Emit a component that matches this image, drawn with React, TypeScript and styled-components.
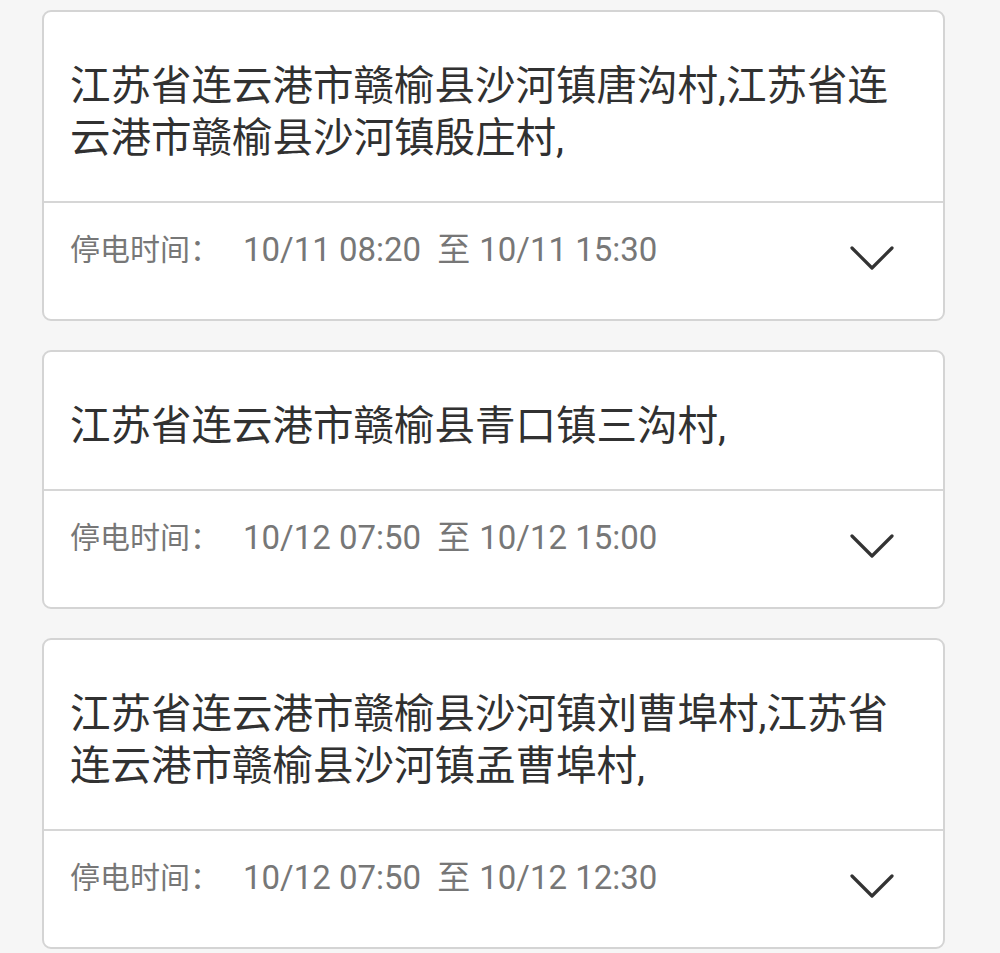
import styled, { createGlobalStyle } from "styled-components";

const GlobalStyle = createGlobalStyle`
  body {
    margin: 0;
    background: #f6f6f6;
    font-family: Roboto, "Noto Sans CJK SC", sans-serif;
  }
`;

const Page = styled.div`
  display: flex;
  flex-direction: column;
  gap: 29px;
  padding: 10px 55px 8px 42px;
`;

const Card = styled.div`
  background: #fff;
  border: 2px solid #d4d4d4;
  border-radius: 9px;
`;

const Address = styled.div`
  padding: 48px 26px 37px 26px;
  font-size: 40.5px;
  line-height: 52px;
  color: #313131;
`;

const Footer = styled.div`
  display: flex;
  align-items: flex-start;
  padding: 29px 49px 48px 26px;
  border-top: 2px solid #d6d6d6;
`;

const Label = styled.span`
  font-size: 30px;
  line-height: 36px;
  color: #777;
`;

const Time = styled.span`
  margin-left: 23px;
  font-size: 33px;
  line-height: 36px;
  color: #777;
`;

const To = styled.span`
  margin: 0 9px 0 16px;
`;

const Toggle = styled.button`
  margin-left: auto;
  margin-top: 14px;
  padding: 0;
  border: none;
  background: none;
  display: flex;
  color: #333;
`;

const Chevron = () => (
  <svg width="44" height="25" viewBox="0 0 44 25" fill="none">
    <polyline
      points="2,2 22,22 42,2"
      stroke="currentColor"
      strokeWidth="3.2"
      strokeLinecap="round"
      strokeLinejoin="round"
    />
  </svg>
);

const outages = [
  {
    address: "江苏省连云港市赣榆县沙河镇唐沟村,江苏省连云港市赣榆县沙河镇殷庄村,",
    start: "10/11 08:20",
    end: "10/11 15:30",
  },
  {
    address: "江苏省连云港市赣榆县青口镇三沟村,",
    start: "10/12 07:50",
    end: "10/12 15:00",
  },
  {
    address: "江苏省连云港市赣榆县沙河镇刘曹埠村,江苏省连云港市赣榆县沙河镇孟曹埠村,",
    start: "10/12 07:50",
    end: "10/12 12:30",
  },
];

const OutageCard = ({ item }: any) => {
  return (
    <Card>
      <Address>{item.address}</Address>
      <Footer>
        <Label>停电时间：</Label>
        <Time>
          {item.start}
          <To>至</To>
          {item.end}
        </Time>
        <Toggle>
          <Chevron />
        </Toggle>
      </Footer>
    </Card>
  );
};

export default function App() {
  return (
    <>
      <GlobalStyle />
      <Page>
        {outages.map((item, i) => (
          <OutageCard key={i} item={item} />
        ))}
      </Page>
    </>
  );
}
